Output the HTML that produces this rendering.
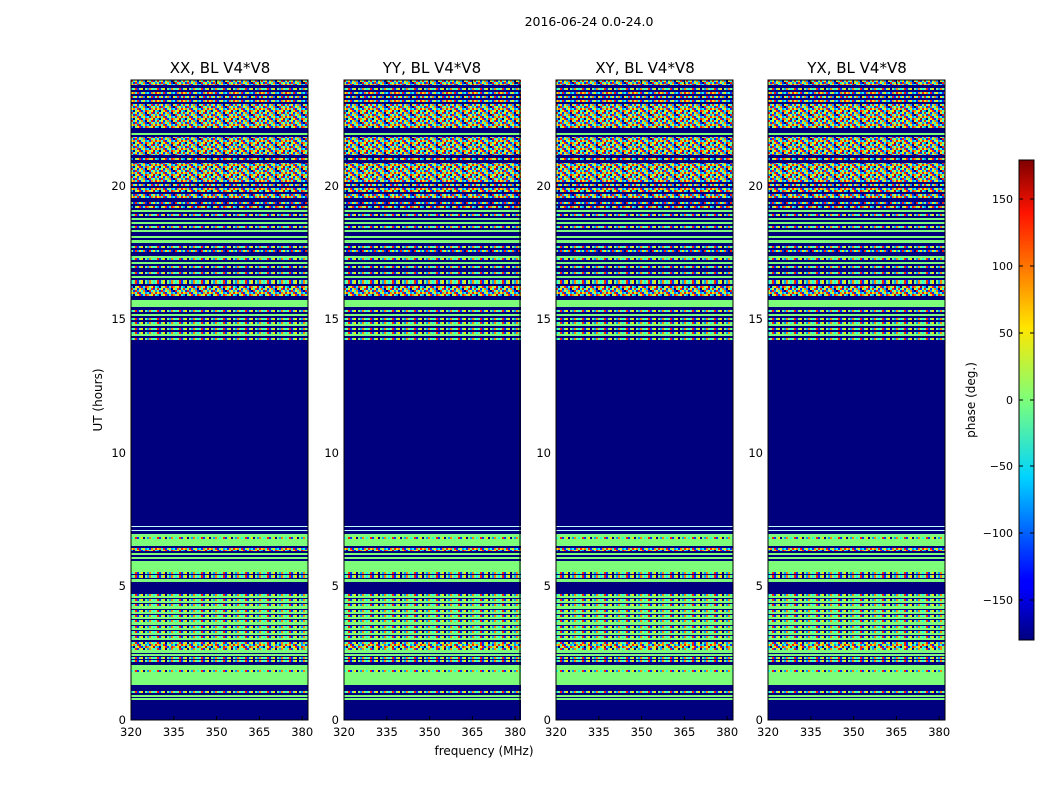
<!DOCTYPE html>
<html><head><meta charset="utf-8"><style>
html,body{margin:0;padding:0;background:#fff;width:1050px;height:800px;overflow:hidden}
text{font-family:"DejaVu Sans","Liberation Sans",sans-serif;fill:#000}
</style></head><body>
<svg width="1050" height="800" viewBox="0 0 1050 800" xmlns="http://www.w3.org/2000/svg">
<defs>
<pattern id="N" width="26" height="8" patternUnits="userSpaceOnUse">
<rect width="26" height="8" fill="#20ffe0"/>
<g>
<rect x="0" y="0" width="2" height="2" fill="#ff2000"/><rect x="2" y="0" width="2" height="2" fill="#20ffe0"/><rect x="4" y="0" width="2" height="2" fill="#ffe000"/><rect x="6" y="0" width="2" height="2" fill="#0030ff"/><rect x="8" y="0" width="2" height="2" fill="#7dff7a"/><rect x="10" y="0" width="2" height="2" fill="#ff8000"/><rect x="12" y="0" width="2" height="2" fill="#00a0ff"/><rect x="14" y="0" width="2" height="2" fill="#00007f"/><rect x="16" y="0" width="2" height="2" fill="#ffe000"/><rect x="18" y="0" width="2" height="2" fill="#20ffe0"/><rect x="20" y="0" width="2" height="2" fill="#ff2000"/><rect x="22" y="0" width="2" height="2" fill="#0030ff"/><rect x="24" y="0" width="2" height="2" fill="#7dff7a"/>
<rect x="0" y="2" width="2" height="2" fill="#7dff7a"/><rect x="2" y="2" width="2" height="2" fill="#0030ff"/><rect x="4" y="2" width="2" height="2" fill="#ff2000"/><rect x="6" y="2" width="2" height="2" fill="#00a0ff"/><rect x="8" y="2" width="2" height="2" fill="#ffe000"/><rect x="10" y="2" width="2" height="2" fill="#20ffe0"/><rect x="12" y="2" width="2" height="2" fill="#ff8000"/><rect x="14" y="2" width="2" height="2" fill="#0030ff"/><rect x="16" y="2" width="2" height="2" fill="#00007f"/><rect x="18" y="2" width="2" height="2" fill="#ff2000"/><rect x="20" y="2" width="2" height="2" fill="#20ffe0"/><rect x="22" y="2" width="2" height="2" fill="#ffe000"/><rect x="24" y="2" width="2" height="2" fill="#00a0ff"/>
<rect x="0" y="4" width="2" height="2" fill="#ffe000"/><rect x="2" y="4" width="2" height="2" fill="#ff8000"/><rect x="4" y="4" width="2" height="2" fill="#20ffe0"/><rect x="6" y="4" width="2" height="2" fill="#ff2000"/><rect x="8" y="4" width="2" height="2" fill="#0030ff"/><rect x="10" y="4" width="2" height="2" fill="#7dff7a"/><rect x="12" y="4" width="2" height="2" fill="#ffe000"/><rect x="14" y="4" width="2" height="2" fill="#00a0ff"/><rect x="16" y="4" width="2" height="2" fill="#20ffe0"/><rect x="18" y="4" width="2" height="2" fill="#0030ff"/><rect x="20" y="4" width="2" height="2" fill="#ff8000"/><rect x="22" y="4" width="2" height="2" fill="#7dff7a"/><rect x="24" y="4" width="2" height="2" fill="#ff2000"/>
<rect x="0" y="6" width="2" height="2" fill="#00a0ff"/><rect x="2" y="6" width="2" height="2" fill="#00007f"/><rect x="4" y="6" width="2" height="2" fill="#7dff7a"/><rect x="6" y="6" width="2" height="2" fill="#ffe000"/><rect x="8" y="6" width="2" height="2" fill="#ff2000"/><rect x="10" y="6" width="2" height="2" fill="#0030ff"/><rect x="12" y="6" width="2" height="2" fill="#20ffe0"/><rect x="14" y="6" width="2" height="2" fill="#ff2000"/><rect x="16" y="6" width="2" height="2" fill="#ff8000"/><rect x="18" y="6" width="2" height="2" fill="#7dff7a"/><rect x="20" y="6" width="2" height="2" fill="#ffe000"/><rect x="22" y="6" width="2" height="2" fill="#c00000"/><rect x="24" y="6" width="2" height="2" fill="#20ffe0"/>
</g>
</pattern>
<pattern id="M" width="22" height="2" patternUnits="userSpaceOnUse">
<rect width="22" height="2" fill="#7dff7a"/>
<rect x="0" width="2" height="2" fill="#20ffe0"/><rect x="4" width="2" height="2" fill="#ff2000"/><rect x="6" width="2" height="2" fill="#0030ff"/><rect x="10" width="2" height="2" fill="#ffe000"/><rect x="12" width="2" height="2" fill="#00007f"/><rect x="16" width="2" height="2" fill="#00a0ff"/><rect x="18" width="2" height="2" fill="#ff8000"/>
</pattern>
<linearGradient id="jet" x1="0" y1="1" x2="0" y2="0">
<stop offset="0" stop-color="#00007f"/><stop offset="0.11" stop-color="#0000ff"/><stop offset="0.125" stop-color="#0000ff"/><stop offset="0.34" stop-color="#00d4ff"/><stop offset="0.5" stop-color="#7dff7a"/><stop offset="0.65" stop-color="#ffe600"/><stop offset="0.89" stop-color="#ff1300"/><stop offset="1" stop-color="#7f0000"/>
</linearGradient>
<g id="P">
<rect width="177" height="640" fill="#00007f"/>
<rect y="0" width="177" height="5" fill="url(#N)"/>
<rect y="8" width="177" height="2" fill="url(#M)"/>
<rect y="12" width="177" height="2" fill="url(#N)"/>
<rect y="16" width="177" height="2" fill="url(#N)"/>
<rect y="20" width="177" height="2" fill="url(#N)"/>
<rect y="24" width="177" height="24" fill="url(#N)"/>
<rect y="53" width="177" height="2" fill="#7dff7a"/>
<rect y="57" width="177" height="18" fill="url(#N)"/>
<rect y="78" width="177" height="2" fill="url(#N)"/>
<rect y="83" width="177" height="19" fill="url(#N)"/>
<rect y="104" width="177" height="2" fill="url(#N)"/>
<rect y="108" width="177" height="4" fill="url(#N)"/>
<rect y="114" width="177" height="4" fill="url(#N)"/>
<rect y="122" width="177" height="2" fill="url(#N)"/>
<rect y="126" width="177" height="2" fill="url(#N)"/>
<rect y="130" width="177" height="2" fill="#7dff7a"/>
<rect y="134" width="177" height="2" fill="url(#M)"/>
<rect y="138" width="177" height="2" fill="#7dff7a"/>
<rect y="142" width="177" height="2" fill="#7dff7a"/>
<rect y="146" width="177" height="2" fill="url(#M)"/>
<rect y="150" width="177" height="2" fill="#7dff7a"/>
<rect y="156" width="177" height="2" fill="#7dff7a"/>
<rect y="160" width="177" height="3" fill="#7dff7a"/>
<rect y="166" width="177" height="2" fill="url(#M)"/>
<rect y="170" width="177" height="2" fill="url(#N)"/>
<rect y="176" width="177" height="2" fill="#7dff7a"/>
<rect y="178" width="177" height="2" fill="url(#M)"/>
<rect y="182" width="177" height="2" fill="#7dff7a"/>
<rect y="186" width="177" height="2" fill="url(#M)"/>
<rect y="192" width="177" height="2" fill="url(#M)"/>
<rect y="196" width="177" height="2" fill="#7dff7a"/>
<rect y="200" width="177" height="4" fill="url(#M)"/>
<rect y="206" width="177" height="10" fill="url(#N)"/>
<rect y="220" width="177" height="7" fill="#7dff7a"/>
<rect y="230" width="177" height="2" fill="url(#M)"/>
<rect y="234" width="177" height="2" fill="#7dff7a"/>
<rect y="238" width="177" height="2" fill="url(#M)"/>
<rect y="242" width="177" height="2" fill="url(#M)"/>
<rect y="244" width="177" height="2" fill="#7dff7a"/>
<rect y="248" width="177" height="2" fill="url(#M)"/>
<rect y="252" width="177" height="2" fill="url(#M)"/>
<rect y="254" width="177" height="2" fill="#7dff7a"/>
<rect y="258" width="177" height="2" fill="url(#M)"/>
<rect y="446" width="177" height="1" fill="#c8ffff"/>
<rect y="450" width="177" height="1" fill="#c8ffff"/>
<rect y="454" width="177" height="12" fill="#7dff7a"/>
<rect y="457" width="177" height="2" fill="url(#M)"/>
<rect y="468" width="177" height="3" fill="url(#N)"/>
<rect y="473" width="177" height="2" fill="#7dff7a"/>
<rect y="477" width="177" height="2" fill="#7dff7a"/>
<rect y="481" width="177" height="11" fill="#7dff7a"/>
<rect y="492" width="177" height="2" fill="url(#M)"/>
<rect y="495" width="177" height="3" fill="url(#M)"/>
<rect y="499" width="177" height="3" fill="#7dff7a"/>
<rect y="514" width="177" height="2" fill="url(#M)"/><rect y="516" width="177" height="2" fill="#7dff7a"/>
<rect y="519" width="177" height="2" fill="url(#M)"/><rect y="521" width="177" height="2" fill="#7dff7a"/>
<rect y="524" width="177" height="2" fill="url(#M)"/><rect y="526" width="177" height="3" fill="#7dff7a"/>
<rect y="530" width="177" height="2" fill="url(#M)"/><rect y="532" width="177" height="2" fill="#7dff7a"/>
<rect y="535" width="177" height="2" fill="url(#M)"/><rect y="537" width="177" height="2" fill="#7dff7a"/>
<rect y="540" width="177" height="2" fill="url(#M)"/><rect y="542" width="177" height="3" fill="#7dff7a"/>
<rect y="546" width="177" height="2" fill="url(#M)"/><rect y="548" width="177" height="2" fill="#7dff7a"/>
<rect y="551" width="177" height="2" fill="url(#M)"/><rect y="553" width="177" height="2" fill="#7dff7a"/>
<rect y="556" width="177" height="2" fill="url(#M)"/><rect y="558" width="177" height="2" fill="#7dff7a"/>
<rect y="562" width="177" height="2" fill="url(#M)"/><rect y="564" width="177" height="4" fill="url(#N)"/>
<rect y="568" width="177" height="2" fill="url(#M)"/><rect y="570" width="177" height="3" fill="#7dff7a"/>
<rect y="574" width="177" height="2" fill="#7dff7a"/><rect y="577" width="177" height="2" fill="url(#M)"/>
<rect y="580" width="177" height="2" fill="url(#M)"/>
<rect y="585" width="177" height="5" fill="#7dff7a"/>
<rect y="590" width="177" height="2" fill="url(#M)"/>
<rect y="592" width="177" height="2" fill="#7dff7a"/>
<rect y="594" width="177" height="11" fill="#7dff7a"/>
<rect y="611" width="177" height="2" fill="url(#M)"/>
<rect y="615" width="177" height="2" fill="#7dff7a"/>
<rect y="618" width="177" height="2" fill="#7dff7a"/>
</g>
<g id="XT" font-size="11.5" text-anchor="middle">
<text x="0" y="736">320</text><text x="42.8" y="736">335</text><text x="85.6" y="736">350</text><text x="128.4" y="736">365</text><text x="171.2" y="736">380</text>
<g stroke="#000" stroke-width="1"><path d="M42.8 720v-4M85.6 720v-4M128.4 720v-4M171.2 720v-4M42.8 80v4M85.6 80v4M128.4 80v4M171.2 80v4"/></g>
</g>
<g id="YT" font-size="11.5" text-anchor="end">
<text x="-5" y="724">0</text><text x="-5" y="590">5</text><text x="-5" y="457">10</text><text x="-5" y="323">15</text><text x="-5" y="190">20</text>
</g>
</defs>
<text x="589" y="26" font-size="12.5" text-anchor="middle">2016-06-24 0.0-24.0</text>

<use href="#P" x="131" y="80"/>
<use href="#P" x="344" y="80"/>
<use href="#P" x="556" y="80"/>
<use href="#P" x="768" y="80"/>
<g fill="none" stroke="#000" stroke-width="1">
<rect x="131" y="80" width="177" height="640"/>
<rect x="344" y="80" width="176" height="640"/>
<rect x="556" y="80" width="177" height="640"/>
<rect x="768" y="80" width="177" height="640"/>
</g>
<use href="#XT" x="131"/><use href="#XT" x="344"/><use href="#XT" x="556"/><use href="#XT" x="768"/>
<use href="#YT" x="131"/><use href="#YT" x="344"/><use href="#YT" x="556"/><use href="#YT" x="768"/>

<g font-size="15" text-anchor="middle">
<text x="220" y="73">XX, BL V4*V8</text>
<text x="432" y="73">YY, BL V4*V8</text>
<text x="645" y="73">XY, BL V4*V8</text>
<text x="857" y="73">YX, BL V4*V8</text>
</g>
<text x="484" y="755" font-size="12" text-anchor="middle">frequency (MHz)</text>
<text transform="translate(102,400) rotate(-90)" font-size="12" text-anchor="middle">UT (hours)</text>

<rect x="1019" y="160" width="15" height="480" fill="url(#jet)" stroke="#000" stroke-width="1"/>
<g stroke="#000"><path d="M1019 199h4M1030 199h4M1019 266h4M1030 266h4M1019 333h4M1030 333h4M1019 400h4M1030 400h4M1019 466h4M1030 466h4M1019 533h4M1030 533h4M1019 600h4M1030 600h4"/></g>
<g font-size="11" text-anchor="end">
<text x="1013" y="203">150</text><text x="1013" y="270">100</text><text x="1013" y="337">50</text><text x="1013" y="404">0</text><text x="1013" y="470">−50</text><text x="1013" y="537">−100</text><text x="1013" y="604">−150</text>
</g>
<text transform="translate(975,400) rotate(-90)" font-size="12" text-anchor="middle">phase (deg.)</text>
</svg>
</body></html>
